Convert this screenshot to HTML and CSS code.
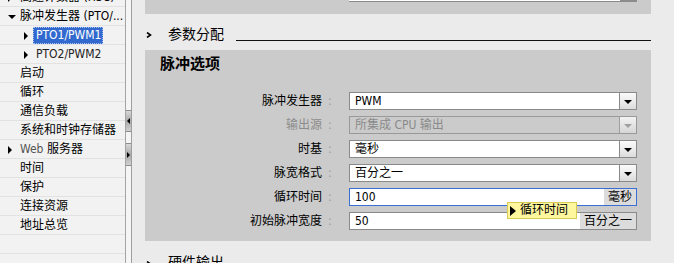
FILE: index.html
```html
<!DOCTYPE html>
<html lang="zh-CN">
<head>
<meta charset="utf-8">
<title>脉冲选项</title>
<link rel="stylesheet" href="styles.css">
</head>
<body>
<div class="app">
  <div class="tree">
    <div class="row l0"><span class="tri right"></span><span class="txt">高速计数器 (HSC)</span></div>
    <div class="row l0"><span class="tri down"></span><span class="txt">脉冲发生器 (PTO/...</span></div>
    <div class="row l1"><span class="tri right"></span><span class="sel">PTO1/PWM1</span></div>
    <div class="row l1"><span class="tri right"></span><span class="lbl">PTO2/PWM2</span></div>
    <div class="row l0"><span class="tri"></span><span class="txt">启动</span></div>
    <div class="row l0"><span class="tri"></span><span class="txt">循环</span></div>
    <div class="row l0"><span class="tri"></span><span class="txt">通信负载</span></div>
    <div class="row l0"><span class="tri"></span><span class="txt">系统和时钟存储器</span></div>
    <div class="row l0"><span class="tri right"></span><span class="txt"><span class="web">Web</span> 服务器</span></div>
    <div class="row l0"><span class="tri"></span><span class="txt">时间</span></div>
    <div class="row l0"><span class="tri"></span><span class="txt">保护</span></div>
    <div class="row l0"><span class="tri"></span><span class="txt">连接资源</span></div>
    <div class="row l0"><span class="tri"></span><span class="txt">地址总览</span></div>
    <div class="row l0"></div>
    <div class="row l0"></div>
  </div>
  <div class="splitter">
    <div class="sbtn sleft"></div>
    <div class="sbtn sright"></div>
  </div>
  <div class="main">
    <div class="prevbox">
      <div class="prevfield"></div>
      <div class="prevbtn"></div>
    </div>
    <div class="sechead">
      <svg class="chev" width="6" height="6" viewBox="0 0 6 6"><path d="M1 0.5 L4.5 3 L1 5.5" fill="none" stroke="#000" stroke-width="1.6"/></svg>
      <span class="sectitle">参数分配</span>
      <div class="rule"></div>
    </div>
    <div class="box">
      <div class="boxtitle">脉冲选项</div>
      <div class="form">
        <div class="frow">
          <span class="flabel">脉冲发生器</span><span class="colon">:</span>
          <div class="field"><span class="val">PWM</span><span class="ddbtn"></span></div>
        </div>
        <div class="frow disabled">
          <span class="flabel">输出源</span><span class="colon">:</span>
          <div class="field"><span class="val">所集成 CPU 输出</span><span class="ddbtn"></span></div>
        </div>
        <div class="frow">
          <span class="flabel">时基</span><span class="colon">:</span>
          <div class="field"><span class="val">毫秒</span><span class="ddbtn"></span></div>
        </div>
        <div class="frow">
          <span class="flabel">脉宽格式</span><span class="colon">:</span>
          <div class="field"><span class="val">百分之一</span><span class="ddbtn"></span></div>
        </div>
        <div class="frow">
          <span class="flabel">循环时间</span><span class="colon">:</span>
          <div class="field focus"><span class="val">100</span><span class="unit">毫秒</span></div>
        </div>
        <div class="frow">
          <span class="flabel">初始脉冲宽度</span><span class="colon">:</span>
          <div class="field"><span class="val">50</span><span class="unit">百分之一</span></div>
        </div>
      </div>
      <div class="tooltip"><span class="ttri"></span><span>循环时间</span></div>
    </div>
    <div class="sechead next">
      <svg class="chev" width="6" height="6" viewBox="0 0 6 6"><path d="M1 0.5 L4.5 3 L1 5.5" fill="none" stroke="#000" stroke-width="1.6"/></svg>
      <span class="sectitle">硬件输出</span>
    </div>
  </div>
</div>
</body>
</html>
```
FILE: styles.css
```css
* { box-sizing: border-box; }
html, body { margin: 0; padding: 0; }
body {
  width: 674px;
  height: 263px;
  overflow: hidden;
  background: #ebebeb;
  font-family: "DejaVu Sans Condensed", "Liberation Sans", "Noto Sans CJK SC", sans-serif;
  font-size: 12px;
  color: #000;
}
.app { display: flex; height: 263px; overflow: hidden; }

/* tree */
.tree {
  width: 126px;
  flex: none;
  background: #f2f2f2;
  border-right: 1px solid #a4a4a4;
  overflow: hidden;
  display: flex;
  flex-direction: column;
}
.row {
  flex: none;
  height: 19px;
  border-bottom: 1px solid #e2e2e2;
  display: flex;
  align-items: center;
  white-space: nowrap;
  line-height: 15px;
  padding-top: 1px;
}
.row:first-child { margin-top: -12px; }
.row.l0 { padding-left: 8px; }
.row.l1 { padding-left: 24px; }
.tri { flex: none; width: 12px; height: 10px; display: flex; align-items: center; }
.row.l1 .tri { width: 9px; }
.tri.down::before {
  content: "";
  border-left: 4px solid transparent;
  border-right: 4px solid transparent;
  border-top: 4px solid #000;
}
.tri.right::before {
  content: "";
  border-top: 4px solid transparent;
  border-bottom: 4px solid transparent;
  border-left: 4px solid #000;
}
.txt { overflow: hidden; }
.web { color: #555; }
.sel {
  background: #3169cf;
  color: #fff;
  padding: 1px 2px 1px 3px;
  outline: 1px dotted #a8c0ee;
  outline-offset: -1px;
}
.lbl { padding-left: 3px; color: #222; }

/* splitter */
.splitter {
  width: 6px;
  flex: none;
  background: #f5f5f5;
  border-right: 1px solid #9e9e9e;
  display: flex;
  flex-direction: column;
  padding-top: 110px;
  gap: 11px;
}
.sbtn {
  width: 5px;
  height: 22px;
  background: linear-gradient(#d8d8d8, #a9a9a9 50%, #d0d0d0);
  border-top: 1px solid #8c8c8c;
  border-bottom: 1px solid #8c8c8c;
  display: flex;
  align-items: center;
  justify-content: center;
}
.sright { height: 23px; }
.sleft::before {
  content: "";
  border-top: 3px solid transparent;
  border-bottom: 3px solid transparent;
  border-right: 3px solid #000;
}
.sright::before {
  content: "";
  border-top: 3px solid transparent;
  border-bottom: 3px solid transparent;
  border-left: 3px solid #000;
}

/* main */
.main {
  flex: 1;
  padding: 0 23px 0 13px;
  display: flex;
  flex-direction: column;
  overflow: hidden;
}
.prevbox {
  height: 14px;
  flex: none;
  background: #cbcbcb;
  display: flex;
  align-items: flex-start;
  padding-left: 204px;
}
.prevfield { width: 271px; height: 2px; background: #fff; border-bottom: 1px solid #8a8a8a; }
.prevbtn { width: 17px; height: 2px; background: #8c8c8c; }

.sechead {
  height: 36px;
  flex: none;
  display: flex;
  align-items: flex-start;
}
.chev { margin: 18px 0 0 1px; flex: none; }
.sectitle {
  margin: 12px 0 0 16px;
  font-size: 14px;
  line-height: 16px;
  flex: none;
}
.rule {
  flex: 1;
  height: 1px;
  background: #111;
  margin: 26px 0 0 12px;
}
.sechead.next { height: 22px; }
.sechead.next .chev { margin-top: 20px; }
.sechead.next .sectitle { margin-top: 13px; }

.box {
  position: relative;
  height: 191px;
  flex: none;
  background: #cbcbcb;
  padding-top: 5px;
}
.boxtitle {
  margin-left: 15px;
  font-size: 15px;
  line-height: 16px;
  font-weight: bold;
  font-family: "Noto Sans CJK SC", sans-serif;
}
.form {
  margin-top: 21px;
  display: flex;
  flex-direction: column;
  gap: 6px;
}
.frow { display: flex; align-items: center; height: 18px; }
.flabel { width: 177px; text-align: right; line-height: 18px; }
.colon { width: 27px; padding-left: 6px; color: #9a9a9a; line-height: 18px; }
.field {
  width: 288px;
  height: 18px;
  background: #fff;
  border: 1px solid #8a8a8a;
  display: flex;
  align-items: stretch;
}
.val { flex: 1; padding-left: 5px; line-height: 16px; white-space: nowrap; }
.ddbtn {
  width: 17px;
  flex: none;
  border-left: 1px solid #8a8a8a;
  background: linear-gradient(#fbfbfb, #dcdcdc);
  display: flex;
  align-items: center;
  justify-content: center;
}
.ddbtn::before {
  content: "";
  margin-top: 1px;
  border-left: 4px solid transparent;
  border-right: 4px solid transparent;
  border-top: 4px solid #000;
}
.disabled .flabel { color: #8c8c8c; }
.disabled .field { background: #cbcbcb; border-color: #999; }
.disabled .val { color: #8a8a8a; }
.disabled .ddbtn { border-left-color: #a0a0a0; background: linear-gradient(#f2f2f2, #d6d6d6); }
.disabled .ddbtn::before { border-top-color: #a0a0a0; }
.field.focus { border-color: #3a6fd4; }
.unit {
  flex: none;
  background: #dcdcdc;
  padding: 0 4px;
  line-height: 16px;
}

.tooltip {
  position: absolute;
  left: 362px;
  top: 152px;
  width: 70px;
  height: 17px;
  background: #fff79e;
  border: 1px solid #d9cc52;
  display: flex;
  align-items: center;
  gap: 4px;
  padding-left: 2px;
  line-height: 15px;
}
.ttri {
  flex: none;
  border-top: 5px solid transparent;
  border-bottom: 5px solid transparent;
  border-left: 6px solid #000;
}
```
